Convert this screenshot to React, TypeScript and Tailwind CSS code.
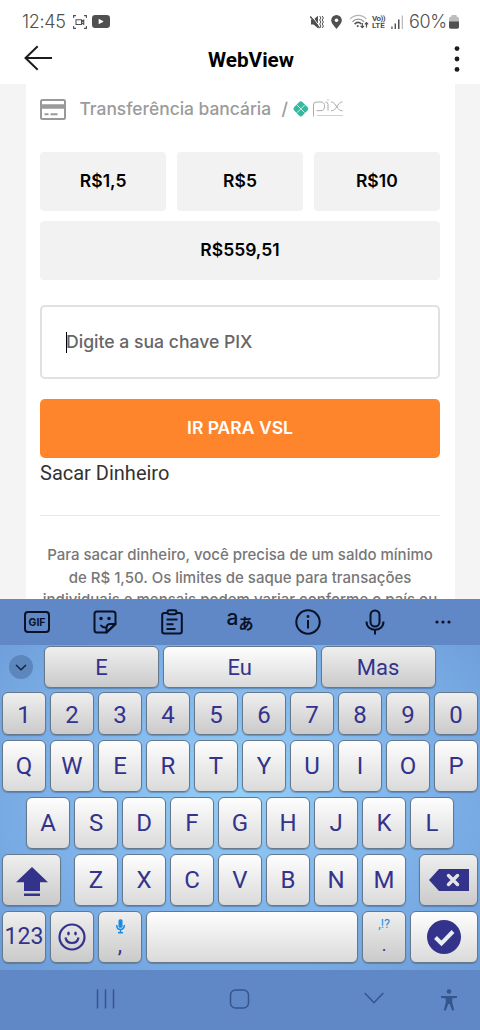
import type { ReactNode } from "react";
import clsx from "clsx";

const numeros = ["1", "2", "3", "4", "5", "6", "7", "8", "9", "0"];
const fila1 = ["Q", "W", "E", "R", "T", "Y", "U", "I", "O", "P"];
const fila2 = ["A", "S", "D", "F", "G", "H", "J", "K", "L"];
const fila3 = ["Z", "X", "C", "V", "B", "N", "M"];

interface TeclaProps {
  children?: ReactNode;
  className?: string;
  oscura?: boolean;
}

function Tecla({ children, className = "w-11", oscura = false }: TeclaProps) {
  return (
    <button
      className={clsx(
        "flex h-full shrink-0 items-center justify-center rounded-[6px] border border-[#65788c] bg-linear-to-b text-[#34338b] shadow-[0_1px_1px_rgba(40,60,90,0.35)]",
        oscura ? "from-[#efefef] to-[#cacaca]" : "from-[#fefefe] to-[#dadada]",
        className
      )}
    >
      {children}
    </button>
  );
}

function StatusBar() {
  return (
    <div className="flex h-[43px] items-center pl-[22px] pr-[21px] text-[#505050]">
      <span className="w-[44px] whitespace-nowrap text-[18px] leading-none tracking-[-0.35px] font-[Inter,sans-serif] font-light">12:45</span>
      <svg className="ml-[7px]" width="14" height="14" viewBox="0 0 14 14" fill="none" stroke="currentColor" strokeWidth="1.1">
        <path d="M.6 3V.6H3M11 .6h2.4V3M13.4 11v2.4H11M3 13.4H.6V11M3 4.700h5.500v4.800H3zM8.500 6.500l2.200-1.500v4.200L8.500 7.800" />
      </svg>
      <svg className="ml-[5px]" width="18" height="13" viewBox="0 0 18 13">
        <rect width="18" height="13" rx="3.300" fill="currentColor" />
        <path d="M6.700 3.700v5.600l5-2.800z" fill="#fff" />
      </svg>

      <div className="ml-auto flex items-center">
        {/* Vibración / silencio */}
        <svg width="14" height="14" viewBox="0 0 14 14" fill="none" stroke="currentColor">
          <path d="M1 4.500h2.500L8 .8v12.400L3.500 9.500H1z" fill="currentColor" stroke="none" />
          <path d="M1.500 .5l8.500 11.500" stroke="#fff" strokeWidth="1" />
          <path d="M.3 1.500l9.200 11.500" strokeWidth="1.300" />
          <path d="M9.700 1l1.200 2-1.200 2 1.200 2-1.200 2 1.200 2-1 2M12.200 1l1.200 2-1.200 2 1.200 2-1.200 2 1.200 2-1 2" strokeWidth="1" />
        </svg>
        <svg className="ml-[7px]" width="11" height="14" viewBox="0 0 11 14">
          <path d="M5.500 0a5.300 5.300 0 0 1 5.300 5.300C10.800 8.600 7.500 11.200 5.500 14 3.500 11.200.2 8.600.2 5.300A5.300 5.300 0 0 1 5.500 0z" fill="currentColor" />
          <circle cx="5.500" cy="5.200" r="1.800" fill="#fff" />
        </svg>
        <svg className="ml-[7px]" width="20" height="15" viewBox="0 0 20 15" fill="none" stroke="currentColor">
          <path d="M1 5.200c4.500-5 12-5 16.500 0" stroke="#b5b5b5" strokeWidth="1.200" />
          <path d="M3.400 7.700c3.500-3.500 8.300-3.500 11.700 0" stroke="#999" strokeWidth="1.300" />
          <path d="M5.600 10.100c2-2 4.800-2 6.700-.3" strokeWidth="1.600" />
          <path d="M8 11.800h1.400L8.700 13z" fill="currentColor" />
          <path d="M13.300 9v4.500m-1.700-1.600l1.700 1.700 1.700-1.700M17.500 13.500V8.700m-1.700 1.600l1.700-1.700 1.700 1.700" strokeWidth="1.200" />
        </svg>
        <div className="ml-[3px] flex w-[15px] flex-col font-[Roboto,sans-serif] text-[8px] font-bold leading-[7px]">
          <span className="whitespace-nowrap tracking-[-0.500px]">Vo))</span>
          <span className="tracking-[-0.100px]">LTE</span>
        </div>
        <svg className="ml-[4px]" width="13" height="14" viewBox="0 0 13 14" fill="currentColor">
          <path d="M.3 11.500h1.300V14H.3zM3.600 8.500H5V14H3.600zM7 4.500h1.500V14H7z" />
          <path d="M10.700.5h1.300V14h-1.300z" fill="#bdbdbd" />
        </svg>
        <span className="ml-[5px] w-[39px] whitespace-nowrap font-[Inter,sans-serif] text-[18px] font-light leading-none tracking-[-0.400px]">60%</span>
        <svg className="ml-px" width="10" height="14" viewBox="0 0 10 14">
          <path d="M2.500 1.500V0h5v1.500Q10 1.500 10 4v3H0V4Q0 1.500 2.500 1.500z" fill="#bdbdbd" />
          <path d="M0 6.500h10V12q0 1.700-1.700 1.700H1.700Q0 13.700 0 12z" fill="currentColor" />
        </svg>
      </div>
    </div>
  );
}

function Header() {
  return (
    <header className="flex h-[41px] items-start justify-between pl-[24px] pr-[20px]">
      <svg className="mt-[2px]" width="29" height="26" viewBox="0 0 29 26" fill="none" stroke="#1c1c1c" strokeWidth="2">
        <path d="M28 13H1.500M13.700 1.300L1.500 13l12.200 11.700" />
      </svg>
      <h1 className="mr-[5px] mt-[4px] font-[Roboto,sans-serif] text-[20.700px] font-bold leading-[26px] text-black">WebView</h1>
      <svg className="mt-[2px]" width="6" height="28" viewBox="0 0 6 28" fill="#1c1c1c">
        <circle cx="3" cy="3.600" r="2.400" />
        <circle cx="3" cy="14" r="2.400" />
        <circle cx="3" cy="24.400" r="2.400" />
      </svg>
    </header>
  );
}

function LogoPix() {
  return (
    <svg className="ml-[5px]" width="52" height="20" viewBox="0 0 52 20" fill="none">
      <rect x="2.900" y="3.900" width="11.900" height="11.900" rx="2.500" transform="rotate(45 8.850 9.850)" fill="#35b8a0" />
      <path d="M5 6l7.700 7.700M12.700 6L5 13.700" stroke="#d5f2ea" strokeWidth="1" />
      <path d="M21.500 17.500V6q0-3 3-3H29q3.500 0 3.500 4.300T29 11.700h-4.500M33.500 3q2.500 0 2.500 2.500v6.200M39 3c2 0 2.800.8 3.800 2l3.200 4.500c1 1.300 2 2.200 4.500 2.200M50.500 3c-2 0-2.800.8-3.800 2l-3.200 4.500c-1 1.300-2 2.200-4.500 2.200M36 .3v1.400" stroke="#aaa" strokeWidth="1" />
      <path d="M25 16.500h26" stroke="#d0d0d0" strokeWidth="1" />
    </svg>
  );
}

function Monto({ valor, className }: { valor: string; className?: string }) {
  return (
    <button className={clsx("flex h-[59px] items-center justify-center rounded-[4px] bg-[#f2f2f2] text-[17.500px] font-semibold text-black", className)}>
      {valor}
    </button>
  );
}

function Contenido() {
  return (
    <main className="h-[515px] overflow-hidden bg-[#f4f4f4] px-[25.500px] font-[Inter,sans-serif]">
      <div className="h-full bg-white px-[14.500px] pt-[14px]">
        <div className="flex h-[22px] items-center text-[17.400px] font-medium text-[#9b9b9b]">
          <svg width="26" height="21" viewBox="0 0 26 21" fill="none" stroke="#999" strokeWidth="2">
            <rect x="1" y="1" width="24" height="19" rx="1.500" />
            <path d="M1 7.500h24" strokeWidth="4.500" />
            <path d="M4.500 15.200h4M10.500 15.200h7" />
          </svg>
          <span className="ml-[13.500px] mt-px w-[192px] whitespace-nowrap">Transferência bancária</span>
          <span className="ml-[10px] mt-px w-[5px]">/</span>
          <LogoPix />
        </div>

        <div className="mt-8 grid grid-cols-3 gap-x-[10.500px] gap-y-[10px]">
          <Monto valor="R$1,5" />
          <Monto valor="R$5" />
          <Monto valor="R$10" />
          <Monto valor="R$559,51" className="col-span-3" />
        </div>

        <div className="mt-[25px] flex h-[74px] items-center rounded-[5px] border-2 border-[#e1e1e1] pl-6">
          <span className="h-[21px] w-px bg-black" />
          <span className="-ml-px whitespace-nowrap text-[17.600px] font-medium text-[#666]">Digite a sua chave PIX</span>
        </div>

        <button className="mt-5 flex h-[58.500px] w-full items-center justify-center rounded-[5px] bg-[#ff852d] text-[17.500px] font-semibold text-white">
          IR PARA VSL
        </button>
        <p className="font-[Roboto,sans-serif] text-[20px] leading-[30px] text-[#333]">Sacar Dinheiro</p>

        <hr className="mt-[27.500px] border-[#e8e8e8]" />
        <p className="mt-[28px] text-center text-[15px] font-medium leading-[22.500px] text-[#777]">
          Para sacar dinheiro, você precisa de um saldo mínimo
          <br />
          de R$ 1,50. Os limites de saque para transações
          <br />
          <span className="-mx-2 whitespace-nowrap">individuais e mensais podem variar conforme o país ou</span>
        </p>
      </div>
    </main>
  );
}

function BarraHerramientas() {
  return (
    <div className="flex h-[46px] items-center bg-[#6087c6] pl-[3px] pr-[3px] text-[#091126]">
      <div className="flex flex-1 justify-center">
        <svg width="26" height="22" viewBox="0 0 26 22" fill="none" stroke="currentColor" strokeWidth="2">
          <rect x="1" y="1" width="24" height="20" rx="3" />
          <text x="13" y="14.800" textAnchor="middle" textLength="17" fill="currentColor" stroke="none" className="font-[Inter,sans-serif] text-[10.500px] font-bold">GIF</text>
        </svg>
      </div>
      <div className="flex flex-1 justify-center">
        <svg width="24" height="24" viewBox="0 0 24 24" fill="none" stroke="currentColor" strokeWidth="2" strokeLinejoin="round">
          <path d="M13.500 22.500H4q-2.500 0-2.500-2.500V4Q1.500 1.500 4 1.500h16q2.500 0 2.500 2.500v10z" />
          <path d="M22.500 14h-5q-4 0-4 4v4.500zM7.500 15q2 2.800 5.500 2.500" />
          <circle cx="8" cy="8.500" r=".8" fill="currentColor" />
          <circle cx="16" cy="8.500" r=".8" fill="currentColor" />
        </svg>
      </div>
      <div className="flex flex-1 justify-center">
        <svg width="22" height="26" viewBox="0 0 22 26" fill="none" stroke="currentColor" strokeWidth="2">
          <path d="M6.500 4h-3Q1.200 4 1.200 6.300v16q0 2.300 2.300 2.300h15q2.300 0 2.300-2.300v-16Q20.800 4 18.500 4h-3" />
          <rect x="6.500" y="1.300" width="9" height="4" rx="2" />
          <path d="M5.500 10.500h11M5.500 15.300h7M5.500 20h9" />
        </svg>
      </div>
      <div className="flex flex-1 items-start justify-center whitespace-nowrap">
        <span className="-mt-[4px] font-[Inter,sans-serif] text-[21px] font-medium leading-[24px]">a</span>
        <span className="mt-[1px] font-['Noto_Sans_CJK_JP',sans-serif] text-[15px] font-bold leading-[24px]">あ</span>
      </div>
      <div className="flex flex-1 justify-center">
        <svg width="26" height="26" viewBox="0 0 26 26" fill="none" stroke="currentColor" strokeWidth="2">
          <circle cx="13" cy="13" r="11.700" />
          <path d="M13 11v8.500" />
          <circle cx="13" cy="7.500" r="1.400" fill="currentColor" stroke="none" />
        </svg>
      </div>
      <div className="flex flex-1 justify-center">
        <svg width="20" height="26" viewBox="0 0 20 26" fill="none" stroke="currentColor" strokeWidth="2">
          <rect x="5.500" y="1.500" width="9" height="16" rx="4.500" />
          <path d="M1.500 12.500c0 11 17 11 17 0M10 21v4.500" />
        </svg>
      </div>
      <div className="flex flex-1 justify-center">
        <svg width="16" height="4" viewBox="0 0 16 4" fill="currentColor">
          <circle cx="2" cy="2" r="1.600" />
          <circle cx="8" cy="2" r="1.600" />
          <circle cx="14" cy="2" r="1.600" />
        </svg>
      </div>
    </div>
  );
}

function Teclado() {
  return (
    <section className="flex h-[371px] flex-col bg-[#74a4de] font-[Roboto,sans-serif]">
      <BarraHerramientas />
      <div className="flex flex-1 flex-col bg-[radial-gradient(ellipse_at_50%_45%,#94cff7_0%,#82b7ec_45%,#6c9bd8_100%)]">
        {/* Sugerencias */}
        <div className="mt-px flex h-[42px] items-center gap-[3.500px] text-[22px]">
          <div className="ml-[9px] mr-[7.500px] flex h-6 w-6 shrink-0 items-center justify-center rounded-full bg-[#5d86bd]">
            <svg width="12" height="7" viewBox="0 0 12 7" fill="none" stroke="#15233d" strokeWidth="1.500">
              <path d="M1 1l5 4.700L11 1" />
            </svg>
          </div>
          <Tecla oscura className="w-[115px]">E</Tecla>
          <Tecla className="w-[154.500px]">Eu</Tecla>
          <Tecla oscura className="w-[115px]">Mas</Tecla>
        </div>

        <div className="mt-[3px] flex h-[44px] justify-center gap-1 pt-px text-[24px]">
          {numeros.map((n) => (
            <Tecla key={n} oscura className="w-11 pt-[3px]">{n}</Tecla>
          ))}
        </div>
        <div className="mt-[5px] flex h-[52px] justify-center gap-1 text-[24px]">
          {fila1.map((l) => (
            <Tecla key={l}>{l}</Tecla>
          ))}
        </div>
        <div className="mt-[5px] flex h-[52px] justify-center gap-1 text-[24px]">
          {fila2.map((l) => (
            <Tecla key={l}>{l}</Tecla>
          ))}
        </div>
        <div className="mt-[5px] flex h-[52px] justify-between px-[2px] text-[24px]">
          <Tecla oscura className="w-[59px]">
            <svg className="mt-[3px]" width="32" height="30" viewBox="0 0 32 30" fill="#34338b">
              <path d="M16 0l16 15.300h-8V24H8v-8.700H0zM8 26.500h16V29H8z" />
            </svg>
          </Tecla>
          <div className="flex gap-1">
            {fila3.map((l) => (
              <Tecla key={l}>{l}</Tecla>
            ))}
          </div>
          <Tecla oscura className="w-[59px]">
            <svg width="40" height="22" viewBox="0 0 40 22">
              <path d="M0 11L10 0h30v22H10z" fill="#34338b" />
              <path d="M19.500 6.500l9 9M28.500 6.500l-9 9" stroke="#e4e4e4" strokeWidth="3.500" strokeLinecap="round" />
            </svg>
          </Tecla>
        </div>
        <div className="mt-[5px] flex h-[52px] justify-center gap-1 text-[24px]">
          <Tecla oscura className="w-11 text-[23px]">123</Tecla>
          <Tecla oscura>
            <svg width="28" height="28" viewBox="0 0 28 28" fill="none" stroke="#34338b" strokeWidth="2.200">
              <circle cx="14" cy="14" r="12.500" />
              <path d="M7.500 14.500q1 5.500 6.500 5.500t6.500-5.500" />
              <ellipse cx="10.500" cy="10.500" rx="1.300" ry="2" fill="#34338b" stroke="none" />
              <ellipse cx="17.500" cy="10.500" rx="1.300" ry="2" fill="#34338b" stroke="none" />
            </svg>
          </Tecla>
          <Tecla oscura className="w-11 flex-col">
            <svg width="9" height="15" viewBox="0 0 9 15" fill="none" stroke="#168ce5" strokeWidth="1.500">
              <rect x="2.500" y=".3" width="4" height="8.500" rx="1.500" fill="#168ce5" stroke="none" />
              <path d="M.7 6c0 6 7.600 6 7.600 0M4.500 10.500v3M2 13.800h5" />
            </svg>
            <span className="text-[22px] leading-[22px]">,</span>
          </Tecla>
          <Tecla className="w-[212px]" />
          <Tecla oscura className="w-11 flex-col">
            <span className="mt-[-3px] text-[12.500px] leading-[14px] text-[#168ce5]">,!?</span>
            <span className="mt-[4px] text-[18px] leading-[20px]">.</span>
          </Tecla>
          <Tecla className="w-[68px]">
            <svg width="34" height="34" viewBox="0 0 34 34" fill="none">
              <circle cx="17" cy="17" r="17" fill="#34338b" />
              <path d="M8.500 17.500l6 6L26 11.500" stroke="#e9eef4" strokeWidth="4" />
            </svg>
          </Tecla>
        </div>
      </div>
    </section>
  );
}

function BarraNavegacion() {
  return (
    <nav className="flex h-[60px] items-center bg-[#6087c6] pb-[3px] text-[#34568b]">
      <svg className="ml-[95px]" width="20" height="20" viewBox="0 0 20 20" fill="none" stroke="currentColor" strokeWidth="1.500">
        <path d="M2.500.5v19M10.500.5v19M18.500.5v19" />
      </svg>
      <svg className="ml-[114px]" width="21" height="20" viewBox="0 0 21 20" fill="none" stroke="currentColor" strokeWidth="1.500">
        <rect x="1.500" y="1" width="18" height="18" rx="5" />
      </svg>
      <svg className="ml-[114px] -mt-px" width="20" height="12" viewBox="0 0 20 12" fill="none" stroke="currentColor" strokeWidth="1.500">
        <path d="M.7 1L10 10.700 19.300 1" />
      </svg>
      <svg className="ml-[56px] mt-[3px]" width="18" height="22" viewBox="0 0 18 22" fill="currentColor">
        <circle cx="9" cy="2.500" r="2.300" />
        <path d="M1 7h16v1.800l-4.800.7v4l2 7.700-2 .4L9.700 15H8.300l-2.500 6.600-2-.4 2-7.700v-4L1 8.800z" />
      </svg>
    </nav>
  );
}

export default function App() {
  return (
    <div className="h-[1030px] w-[480px] overflow-hidden bg-white">
      <StatusBar />
      <Header />
      <Contenido />
      <Teclado />
      <BarraNavegacion />
    </div>
  );
}
